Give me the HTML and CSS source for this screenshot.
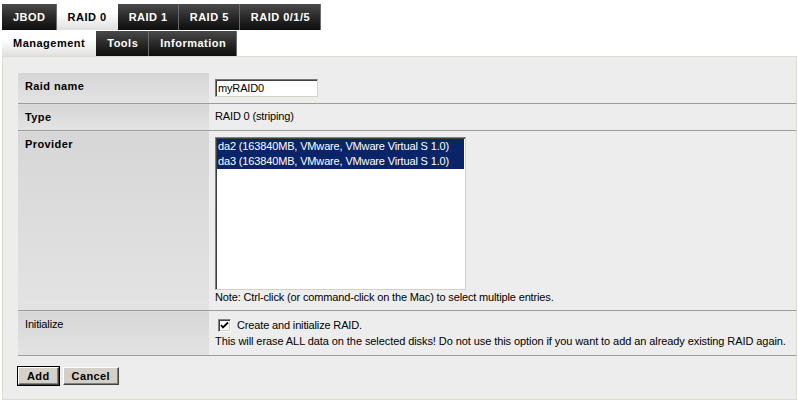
FILE: index.html
```html
<!DOCTYPE html>
<html>
<head>
<meta charset="utf-8">
<title>RAID 0 Management</title>
<link rel="stylesheet" href="styles.css">
</head>
<body>
<div class="page">
  <nav class="tabs">
    <a class="tab">JBOD</a><a class="tab active">RAID 0</a><a class="tab">RAID 1</a><a class="tab">RAID 5</a><a class="tab">RAID 0/1/5</a>
  </nav>
  <nav class="tabs tabs-sub">
    <a class="tab active">Management</a><a class="tab">Tools</a><a class="tab">Information</a>
  </nav>
  <div class="panel">
    <table class="form">
      <tr class="row-name">
        <th class="label">Raid name</th>
        <td class="value"><input class="textbox" type="text" value="myRAID0"></td>
      </tr>
      <tr class="row-type">
        <th class="label">Type</th>
        <td class="value">RAID 0 (striping)</td>
      </tr>
      <tr class="row-provider">
        <th class="label">Provider</th>
        <td class="value">
          <div class="listbox" role="listbox">
            <div class="option selected">da2 (163840MB, VMware, VMware Virtual S 1.0)</div>
            <div class="option selected">da3 (163840MB, VMware, VMware Virtual S 1.0)</div>
          </div>
          <div class="note">Note: Ctrl-click (or command-click on the Mac) to select multiple entries.</div>
        </td>
      </tr>
      <tr class="row-init">
        <th class="label label-plain">Initialize</th>
        <td class="value">
          <label class="check-line"><span class="checkbox"><svg width="9" height="9" viewBox="0 0 9 9"><path d="M1 4 L3 6.5 L8 1.5" fill="none" stroke="#000" stroke-width="1.8"/></svg></span>Create and initialize RAID.</label>
          <div class="hint">This will erase ALL data on the selected disks! Do not use this option if you want to add an already existing RAID again.</div>
        </td>
      </tr>
    </table>
    <div class="actions">
      <button class="btn btn-default">Add</button><button class="btn">Cancel</button>
    </div>
  </div>
</div>
</body>
</html>
```

FILE: styles.css
```css
html, body {
  margin: 0;
  padding: 0;
  background: #fff;
}
body {
  font-family: "Liberation Sans", Arial, sans-serif;
  font-size: 11px;
  line-height: 13px;
  letter-spacing: -0.15px;
  color: #000;
}
.page {
  padding: 4px 1px 0 2px;
}
.tabs {
  display: flex;
  height: 26px;
}
.tabs-sub {
  margin-top: 1px;
  height: 25px;
}
.tab {
  display: flex;
  align-items: center;
  padding: 0 11px;
  font-weight: bold;
  letter-spacing: 0.5px;
  color: #fff;
  background: linear-gradient(#4a4a4a, #262626 55%, #0e0e0e);
  box-shadow: inset -1px 0 #6a6a6a;
  cursor: pointer;
}
.tab.active {
  color: #000;
  background: linear-gradient(#fff 35%, #e0e0e0);
  box-shadow: none;
}
.panel {
  border: 1px solid #dbdbd3;
  background: #ededed;
  padding: 16px 0 14px 15px;
}
.form {
  width: 100%;
  border-collapse: collapse;
}
.form tr {
  border-bottom: 1px solid #9c9c9c;
}
.label {
  width: 177px;
  text-align: left;
  vertical-align: top;
  padding: 7px 7px 6px;
  font-weight: bold;
  letter-spacing: 0.4px;
  background: linear-gradient(#d6d6d6, #e3e3e3);
}
.label-plain {
  font-weight: normal;
  letter-spacing: -0.15px;
}
.value {
  vertical-align: top;
  padding: 6px 6px;
  white-space: nowrap;
}
.textbox {
  display: block;
  box-sizing: border-box;
  width: 103px;
  height: 18px;
  margin: 0;
  padding: 1px 2px;
  font: 11px "Liberation Sans", Arial, sans-serif;
  letter-spacing: -0.15px;
  background: #fff;
  border: 1px solid;
  border-color: #7a7a7a #d4d0c8 #d4d0c8 #7a7a7a;
  box-shadow: inset 1px 1px #404040;
}
.listbox {
  box-sizing: border-box;
  width: 251px;
  height: 153px;
  padding: 1px;
  background: #fff;
  border: 1px solid;
  border-color: #808080 #d4d0c8 #d4d0c8 #808080;
  box-shadow: inset 1px 1px #404040;
}
.option {
  height: 15px;
  line-height: 15px;
  padding: 0 1px;
  white-space: nowrap;
}
.option.selected {
  background: #0a246a;
  color: #fff;
}
.note {
  margin-top: 1px;
}
.check-line {
  display: flex;
  align-items: center;
  height: 17px;
  padding-left: 3px;
}
.checkbox {
  box-sizing: border-box;
  width: 13px;
  height: 13px;
  margin-right: 6px;
  display: flex;
  align-items: center;
  justify-content: center;
  background: #fff;
  border: 1px solid;
  border-color: #808080 #fff #fff #808080;
  box-shadow: inset 1px 1px #404040, inset -1px -1px #d4d0c8;
}
.hint {
  margin-top: 1px;
  margin-bottom: 1px;
  letter-spacing: -0.08px;
}
.actions {
  display: flex;
  gap: 4px;
  margin-top: 11px;
}
.btn {
  box-sizing: border-box;
  height: 18px;
  padding: 0 8px;
  font: bold 11px "Liberation Sans", Arial, sans-serif;
  letter-spacing: 0.4px;
  color: #000;
  background: #d4d0c8;
  border: 1px solid;
  border-color: #fff #404040 #404040 #fff;
  box-shadow: inset -1px -1px #808080;
}
.btn-default {
  outline: 1px solid #000;
  outline-offset: 0;
}
```
